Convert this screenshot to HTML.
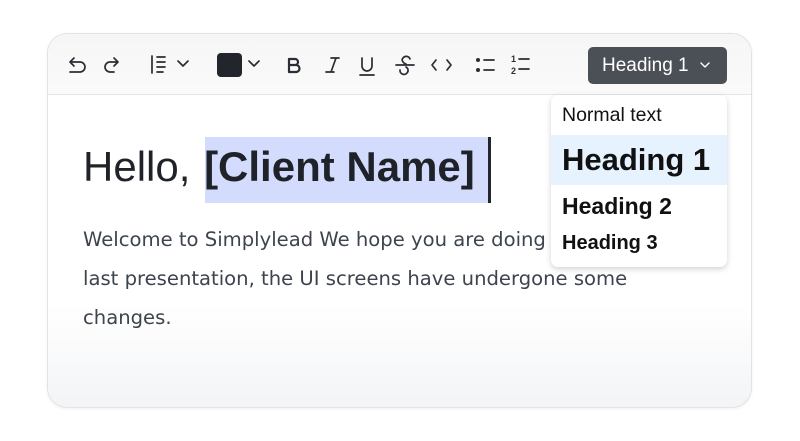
<!DOCTYPE html>
<html><head><meta charset="utf-8"><style>
*{margin:0;padding:0;box-sizing:border-box}
body{width:800px;height:441px;background:#fff;font-family:"Liberation Sans",sans-serif;position:relative;overflow:hidden}
.card{position:absolute;left:47px;top:33px;width:705px;height:375px;border-radius:20px;border:1px solid #e2e3e6;background:linear-gradient(#fff 0,#fff 270px,#f3f4f6 375px);overflow:hidden;box-shadow:0 1px 3px rgba(0,0,0,.06)}
.tb{position:absolute;left:0;top:0;width:100%;height:61px;background:linear-gradient(#f6f6f7,#fafafa);border-bottom:1px solid #e6e6e8}
svg{position:absolute}
.ic{stroke:#2a2d33;fill:none;stroke-width:1.7;stroke-linecap:round;stroke-linejoin:round}
.btn{position:absolute;left:588px;top:47px;width:139px;height:37px;background:#4b5057;border-radius:5px;color:#fff;font-size:19px;line-height:37px;padding-left:14px}
.dd{position:absolute;left:551px;top:95px;width:176px;height:172px;background:#fff;border-radius:7px;box-shadow:0 2px 6px rgba(0,0,0,.18)}
.dd div{position:absolute;left:11px;color:#111;white-space:nowrap}
.hl{position:absolute;left:205px;top:137px;width:283px;height:66px;background:#d3dcfd}
.h{position:absolute;left:83px;top:143px;font-size:42px;color:#1f2329;white-space:nowrap}
.p{position:absolute;left:83px;top:220px;font-family:"DejaVu Sans",sans-serif;font-size:19.6px;line-height:39px;color:#3d444e;white-space:nowrap}
</style></head><body>
<div class="card"><div class="tb"></div></div>
<div class="btn">Heading 1</div>
<svg width="800" height="100" style="left:0;top:0">
<g class="ic">
<path d="M70 62h10a5 5 0 0 1 0 10h-10M70 62l4-4M70 62l4 4"/>
<path d="M118 62h-8a5 5 0 0 0 0 10h4M118 62l-4-4M118 62l-4 4"/>
<path d="M152 56v17M157 57h8M157 62h8M157 67h8M157 72h6"/>
<path d="M178 61l5 5 5-5"/>
<path d="M249 61l5 5 5-5"/>
<path d="M289 59h6a3 3 0 0 1 0 6h-6zM289 65h7a3.5 3.5 0 0 1 0 7h-7zM289 59v13" stroke-width="2.2"/>
<path d="M331 58h8M326 72h8M336 58l-5 14"/>
<path d="M362 58v8a5 5 0 0 0 10 0v-8M360 75h14"/>
<path d="M396 65h18M410 59a4 4 0 0 0-7-1c-2 2 0 5 3 6M400 70a4 4 0 0 0 7 3c2-2 1-5-1-6"/>
<path d="M436 60l-4 5 4 5M447 60l4 5-4 5"/>
<path d="M484 60h10M484 70h10"/>
<path d="M519 59h10M519 69h10"/>
<path d="M701 63l4 4 4-4" stroke="#fff" stroke-width="1.4"/>
</g>
<circle cx="478" cy="60" r="2" fill="#2a2d33"/><circle cx="478" cy="70" r="2" fill="#2a2d33"/>
<text x="511" y="62" font-size="9" font-family="Liberation Sans" fill="#2a2d33" font-weight="bold">1</text>
<text x="511" y="74" font-size="9" font-family="Liberation Sans" fill="#2a2d33" font-weight="bold">2</text>
<rect x="217" y="53" width="25" height="24" rx="4" fill="#22252b"/>
</svg>
<div class="hl"></div>
<div style="position:absolute;left:488px;top:137px;width:3px;height:66px;background:#22252b"></div>
<div class="h">Hello, <b style="margin-left:2px">[Client Name]</b></div>
<div class="p">Welcome to Simplylead We hope you are doing well.<br>last presentation, the UI screens have undergone some<br>changes.</div>
<div class="dd">
<div style="top:9px;font-size:19.5px">Normal text</div>
<div style="top:40px;left:0;width:176px;height:50px;background:#e6f2fd"></div>
<div style="top:47px;font-size:31px;font-weight:bold">Heading 1</div>
<div style="top:98px;font-size:23px;font-weight:bold">Heading 2</div>
<div style="top:137px;font-size:20px;font-weight:bold">Heading 3</div>
</div>
</body></html>
